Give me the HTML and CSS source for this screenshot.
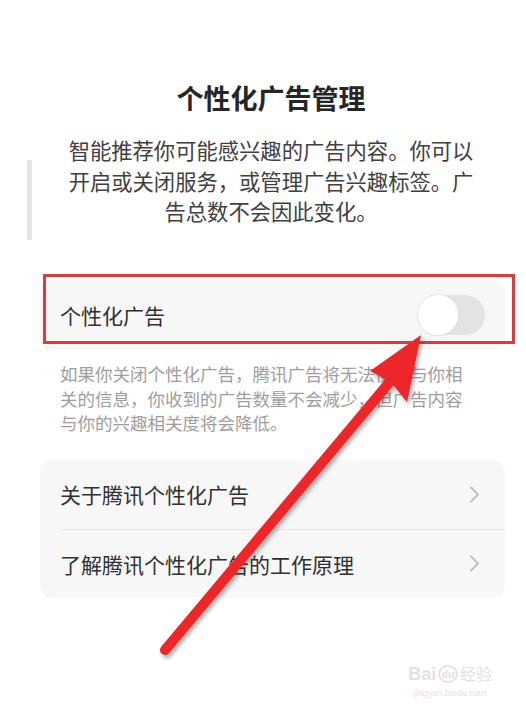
FILE: index.html
```html
<!DOCTYPE html>
<html lang="zh-CN">
<head>
<meta charset="utf-8">
<title>个性化广告管理</title>
<link rel="stylesheet" href="styles.css">
</head>
<body>
<div class="page">
  <h1 class="title">个性化广告管理</h1>
  <p class="desc">智能推荐你可能感兴趣的广告内容。你可以开启或关闭服务，或管理广告兴趣标签。广告总数不会因此变化。</p>

  <div class="section">
    <div class="switch-wrap">
      <div class="card switch-card">
        <span class="label">个性化广告</span>
        <span class="toggle"><span class="knob"></span></span>
      </div>
      <div class="redbox"></div>
    </div>

    <p class="note">如果你关闭个性化广告，腾讯广告将无法使用与你相关的信息，你收到的广告数量不会减少，但广告内容与你的兴趣相关度将会降低。</p>

    <div class="card links">
      <div class="row">
        <div class="row-inner">
          <span class="label">关于腾讯个性化广告</span>
          <svg class="chev" width="11" height="17" viewBox="0 0 11 17"><path d="M2 1.5 L9 8.5 L2 15.5" fill="none" stroke="#bdbdbd" stroke-width="1.8" stroke-linecap="round" stroke-linejoin="round"/></svg>
        </div>
      </div>
      <div class="row last">
        <div class="row-inner">
          <span class="label">了解腾讯个性化广告的工作原理</span>
          <svg class="chev" width="11" height="17" viewBox="0 0 11 17"><path d="M2 1.5 L9 8.5 L2 15.5" fill="none" stroke="#bdbdbd" stroke-width="1.8" stroke-linecap="round" stroke-linejoin="round"/></svg>
        </div>
      </div>
    </div>
  </div>

  <div class="sidebar-mark"></div>

  <div class="watermark">
    <div class="wm-logo">Bai<span class="wm-du">du</span><span class="wm-cn">经验</span></div>
    <div class="wm-url">jingyan.baidu.com</div>
  </div>

  <svg class="arrow" width="526" height="715" viewBox="0 0 526 715">
    <line x1="165" y1="650" x2="393" y2="378" stroke="#ec2629" stroke-width="10" stroke-linecap="round"/>
    <polygon points="421,335 370,371 391,382 407,402" fill="#ec2629"/>
  </svg>
</div>
</body>
</html>
```

FILE: styles.css
```css
html, body {
  margin: 0;
  padding: 0;
  background: #ffffff;
}
body {
  width: 526px;
  height: 715px;
  overflow: hidden;
  font-family: "Noto Sans CJK SC", "Noto Sans", sans-serif;
}
.page {
  position: relative;
  width: 526px;
  height: 715px;
  padding-top: 80px;
  box-sizing: border-box;
}
.title {
  margin: 0;
  padding-left: 16px;
  font-size: 27px;
  line-height: 36px;
  font-weight: 700;
  color: #262626;
  text-align: center;
}
.desc {
  margin: 19px 0 0;
  padding: 0 50px 0 66px;
  font-size: 21.3px;
  line-height: 30.7px;
  color: #404040;
  text-align: center;
}
.section {
  padding: 0 21px 0 40px;
}
.switch-wrap {
  position: relative;
  margin-top: 53px;
}
.card {
  background: #f7f7f7;
  border-radius: 12px;
}
.switch-card {
  height: 70px;
  display: flex;
  align-items: center;
  justify-content: space-between;
  padding: 0 20px;
}
.label {
  font-size: 21px;
  color: #303030;
}
.toggle {
  position: relative;
  display: block;
  width: 67px;
  height: 40px;
  border-radius: 20px;
  background: #e3e3e3;
}
.knob {
  position: absolute;
  left: 0;
  top: 0;
  width: 40px;
  height: 40px;
  border-radius: 50%;
  background: #ffffff;
  box-shadow: 0 0 0 1px #e4e4e4, 0 1px 2px rgba(0,0,0,0.08);
}
.redbox {
  position: absolute;
  left: 3px;
  top: -6px;
  width: 472px;
  height: 70px;
  box-sizing: border-box;
  border: 3px solid #d73c43;
}
.note {
  margin: 12px 0 0;
  padding: 0 35px 0 20px;
  font-size: 17.5px;
  line-height: 24.5px;
  color: #9e9e9e;
}
.links {
  margin-top: 24px;
}
.row {
  height: 70px;
}
.row.last {
  height: 68px;
}
.row-inner {
  height: 100%;
  margin-left: 20px;
  padding-right: 25px;
  display: flex;
  align-items: center;
  justify-content: space-between;
  border-bottom: 1px solid #e9e9e9;
  box-sizing: border-box;
}
.row.last .row-inner {
  border-bottom: none;
}
.chev {
  display: block;
}
.sidebar-mark {
  position: absolute;
  left: 27px;
  top: 160px;
  width: 5px;
  height: 80px;
  background: #e6e6e6;
}
.watermark {
  position: absolute;
  left: 396px;
  top: 662px;
  width: 108px;
  color: #e2e2e2;
  text-align: center;
  white-space: nowrap;
  font-family: "Liberation Sans", "Noto Sans CJK SC", sans-serif;
}
.wm-logo {
  font-size: 18px;
  line-height: 24px;
  font-weight: 700;
}
.wm-du {
  display: inline-block;
  font-size: 11px;
  line-height: 14px;
  border: 2px solid #e2e2e2;
  border-radius: 50%;
  padding: 0 1px;
  margin: 0 2px;
  vertical-align: 2px;
}
.wm-cn {
  font-size: 16px;
  font-weight: 400;
}
.wm-url {
  font-size: 9px;
  line-height: 12px;
}
.arrow {
  position: absolute;
  left: 0;
  top: 0;
  pointer-events: none;
  filter: drop-shadow(2px 3px 2px rgba(60,60,60,0.45));
}
```
